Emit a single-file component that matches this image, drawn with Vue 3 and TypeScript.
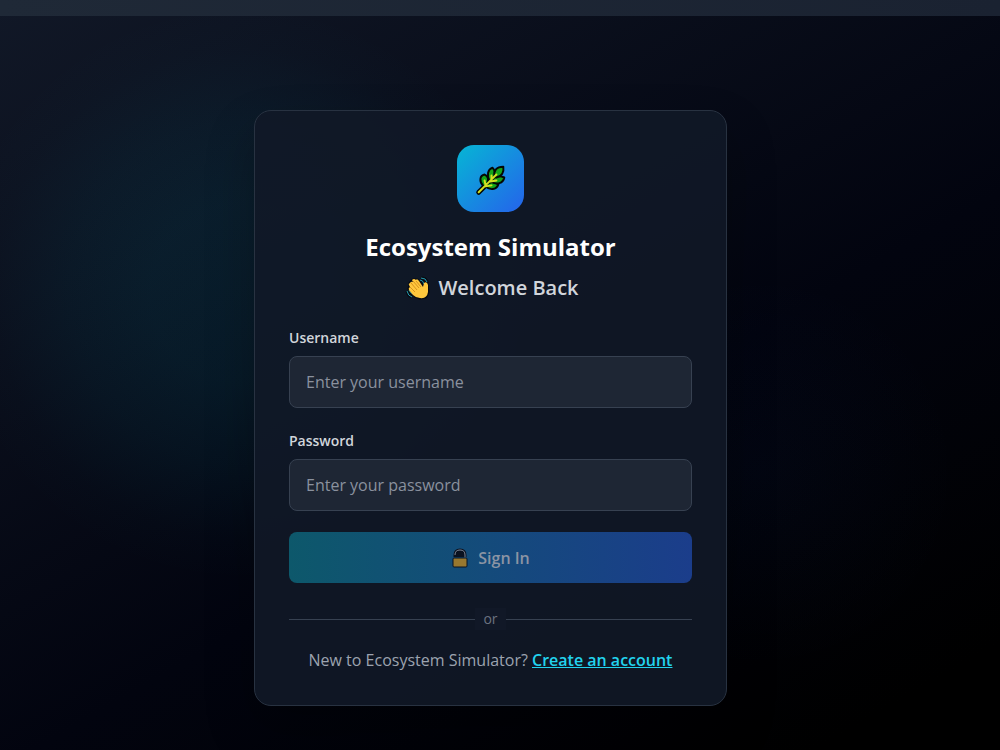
<script setup lang="ts">
import { computed, ref } from 'vue'

const username = ref('')
const password = ref('')
const incomplete = computed(() => !username.value || !password.value)
</script>

<template>
  <div class="page">
    <header class="topbar"></header>
    <main class="stage">
      <section class="card">
        <div class="logo">
          <svg viewBox="0 0 68 68" aria-hidden="true">
            <path class="vein-edge" d="M22 48L29 41L41 29" />
            <g class="leaf">
              <path d="M27 42C22 37 23 31 28 30C33 32 32 38 29 42Z" />
              <path d="M33 36C30 31 31 25 36 23C40 27 39 33 35 37Z" />
              <path d="M29 42C31 37 37 37 42 40C40 46 33 46 29 42Z" />
              <path d="M35 37C37 31 43 31 48 33C47 39 40 41 35 37Z" />
              <path d="M38 32C37 26 40 22 47 22C48 28 45 32 40 33Z" />
            </g>
            <path class="vein" d="M22 48L29 41L40 30M29 41L28 36M35 35L35 31M34 37L40 36M29 42L35 41" />
          </svg>
        </div>
        <h1>Ecosystem Simulator</h1>
        <h2>
          <svg class="wave" viewBox="0 0 32 32" aria-hidden="true">
            <path class="wave-edge" d="M8 11L11 8L15 8L18 12L20 15L21 11L25 11L26 20L24 25L18 26L13 24L7 17Z" />
            <path class="motion-edge" d="M19 6Q24 6 25 10M18 8Q21 8 22 12M5 19Q6 24 10 25M7 18Q8 21 11 22" />
            <path class="motion" d="M19 6Q24 6 25 10M18 8Q21 8 22 12M5 19Q6 24 10 25M7 18Q8 21 11 22" />
            <path class="hand" d="M8 11Q9 9 11 10L10 8Q12 6 14 8Q15 6 17 9L21 15L22 11Q25 9 26 13L26 20Q25 27 18 26Q14 26 11 23L7 18Q6 16 8 15L7 13Q6 12 8 11Z" />
            <path class="fingers" d="M9 11L15 18M11 9L17 16M14 9L19 15M8 15L13 20" />
          </svg>
          <span>Welcome Back</span>
        </h2>
        <form @submit.prevent>
          <div class="field">
            <label for="username">Username</label>
            <input id="username" v-model="username" type="text" placeholder="Enter your username" autocomplete="username" />
          </div>
          <div class="field">
            <label for="password">Password</label>
            <input id="password" v-model="password" type="password" placeholder="Enter your password" autocomplete="current-password" />
          </div>
          <button type="submit" :disabled="incomplete">
            <svg class="lock" viewBox="0 0 18 22" aria-hidden="true">
              <path class="lock-back" d="M4 10V8Q4 3 9 3Q14 3 14 8V10" />
              <path class="shackle" d="M4 8Q4 3 9 3Q14 3 14 8V12" />
              <rect x="2" y="11" width="14" height="9" rx="1" />
            </svg>
            <span>Sign In</span>
          </button>
        </form>
        <div class="divider"><span>or</span></div>
        <p class="signup">New to Ecosystem Simulator? <a href="#register">Create an account</a></p>
      </section>
    </main>
  </div>
</template>

<style>
html {
  background: #020617;
}
body {
  margin: 0;
}
</style>

<style scoped>
* {
  box-sizing: border-box;
}
.page {
  min-height: 100vh;
  display: flex;
  flex-direction: column;
  font-family: "Open Sans", "Noto Sans", sans-serif;
  font-size: 16px;
  background:
    radial-gradient(circle at 24% 39%, rgba(6, 182, 212, 0.09), rgba(6, 182, 212, 0.085) 90px, rgba(6, 182, 212, 0.055) 170px, rgba(6, 182, 212, 0.01) 245px, transparent 290px),
    radial-gradient(circle at 76% 63%, rgba(37, 99, 235, 0.03), transparent 200px),
    linear-gradient(150deg, #111827 0%, #02040f 58%, #000000 92%);
}
.topbar {
  height: 16px;
  background: linear-gradient(90deg, #1f2937, #1a2231);
}
.stage {
  flex: 1;
  display: flex;
  align-items: center;
  justify-content: center;
  padding: 92px 19px 42px 0;
}
.card {
  width: 100%;
  max-width: 473px;
  padding: 34px 34px 33px;
  display: flex;
  flex-direction: column;
  align-items: stretch;
  border: 1px solid #283241;
  border-radius: 17px;
  background: rgba(17, 24, 39, 0.9);
  box-shadow: 0 24px 48px rgba(0, 0, 0, 0.25);
}
.logo {
  width: 67px;
  height: 67px;
  align-self: center;
  border-radius: 17px;
  background: linear-gradient(135deg, #06b6d4, #2563eb);
}
.logo svg {
  display: block;
  width: 100%;
  height: 100%;
}
.leaf {
  fill: #14a51a;
  stroke: #050805;
  stroke-width: 2;
  stroke-linejoin: round;
}
.vein-edge {
  fill: none;
  stroke: #050805;
  stroke-width: 5;
  stroke-linecap: round;
}
.vein {
  fill: none;
  stroke: #d4e021;
  stroke-width: 2;
  stroke-linecap: round;
}
h1 {
  margin: 18px 0 8px;
  color: #ffffff;
  font-size: 24px;
  line-height: 34px;
  font-weight: 700;
  text-align: center;
}
h2 {
  margin: 0 0 22px;
  display: flex;
  align-items: center;
  justify-content: center;
  gap: 4px;
  color: #d1d5db;
  font-size: 20px;
  line-height: 32px;
  font-weight: 600;
}
.wave {
  width: 32px;
  height: 32px;
}
.wave-edge {
  fill: #080b10;
  stroke: #080b10;
  stroke-width: 3;
  stroke-linejoin: round;
}
.motion-edge {
  fill: none;
  stroke: #080b10;
  stroke-width: 3;
}
.motion {
  fill: none;
  stroke: #239bb2;
  stroke-width: 1;
}
.hand {
  fill: #ffc83d;
}
.fingers {
  fill: none;
  stroke: #d9921e;
  stroke-width: 1;
}
form {
  display: flex;
  flex-direction: column;
  gap: 21px;
}
.field {
  display: flex;
  flex-direction: column;
  gap: 6px;
}
label {
  color: #d1d5db;
  font-size: 14px;
  line-height: 24px;
  font-weight: 600;
}
input {
  width: 100%;
  height: 52px;
  padding: 0 16px;
  border: 1px solid #374151;
  border-radius: 8px;
  background: #1e2634;
  color: #ffffff;
  font: inherit;
}
input::placeholder {
  color: #8a919e;
  opacity: 1;
}
button {
  height: 51px;
  display: flex;
  align-items: center;
  justify-content: center;
  gap: 9px;
  padding: 0;
  border: 0;
  border-radius: 8px;
  background: linear-gradient(90deg, #0891b2, #2563eb);
  color: #ffffff;
  font: inherit;
  font-weight: 600;
}
button:disabled {
  background: linear-gradient(90deg, #0d586b, #1b3d8b);
  color: #8b94a4;
}
.lock {
  width: 18px;
  height: 22px;
}
.lock-back {
  fill: #0b1220;
  stroke: #0b1220;
  stroke-width: 3;
}
.shackle {
  fill: none;
  stroke: #7b8291;
  stroke-width: 1;
}
.lock rect {
  fill: #98782f;
  stroke: #0b1220;
  stroke-width: 1;
}
.divider {
  display: flex;
  align-items: center;
  margin-top: 25px;
  color: #6b7280;
  font-size: 14px;
  line-height: 22px;
}
.divider::before,
.divider::after {
  content: "";
  flex: 1;
  height: 1px;
  background: #374151;
}
.divider span {
  padding: 0 8px;
  background: #111827;
}
.signup {
  margin: 18px 0 0;
  color: #9ca3af;
  font-size: 16px;
  line-height: 24px;
  text-align: center;
}
.signup a {
  color: #22d3ee;
  font-weight: 600;
}
</style>
